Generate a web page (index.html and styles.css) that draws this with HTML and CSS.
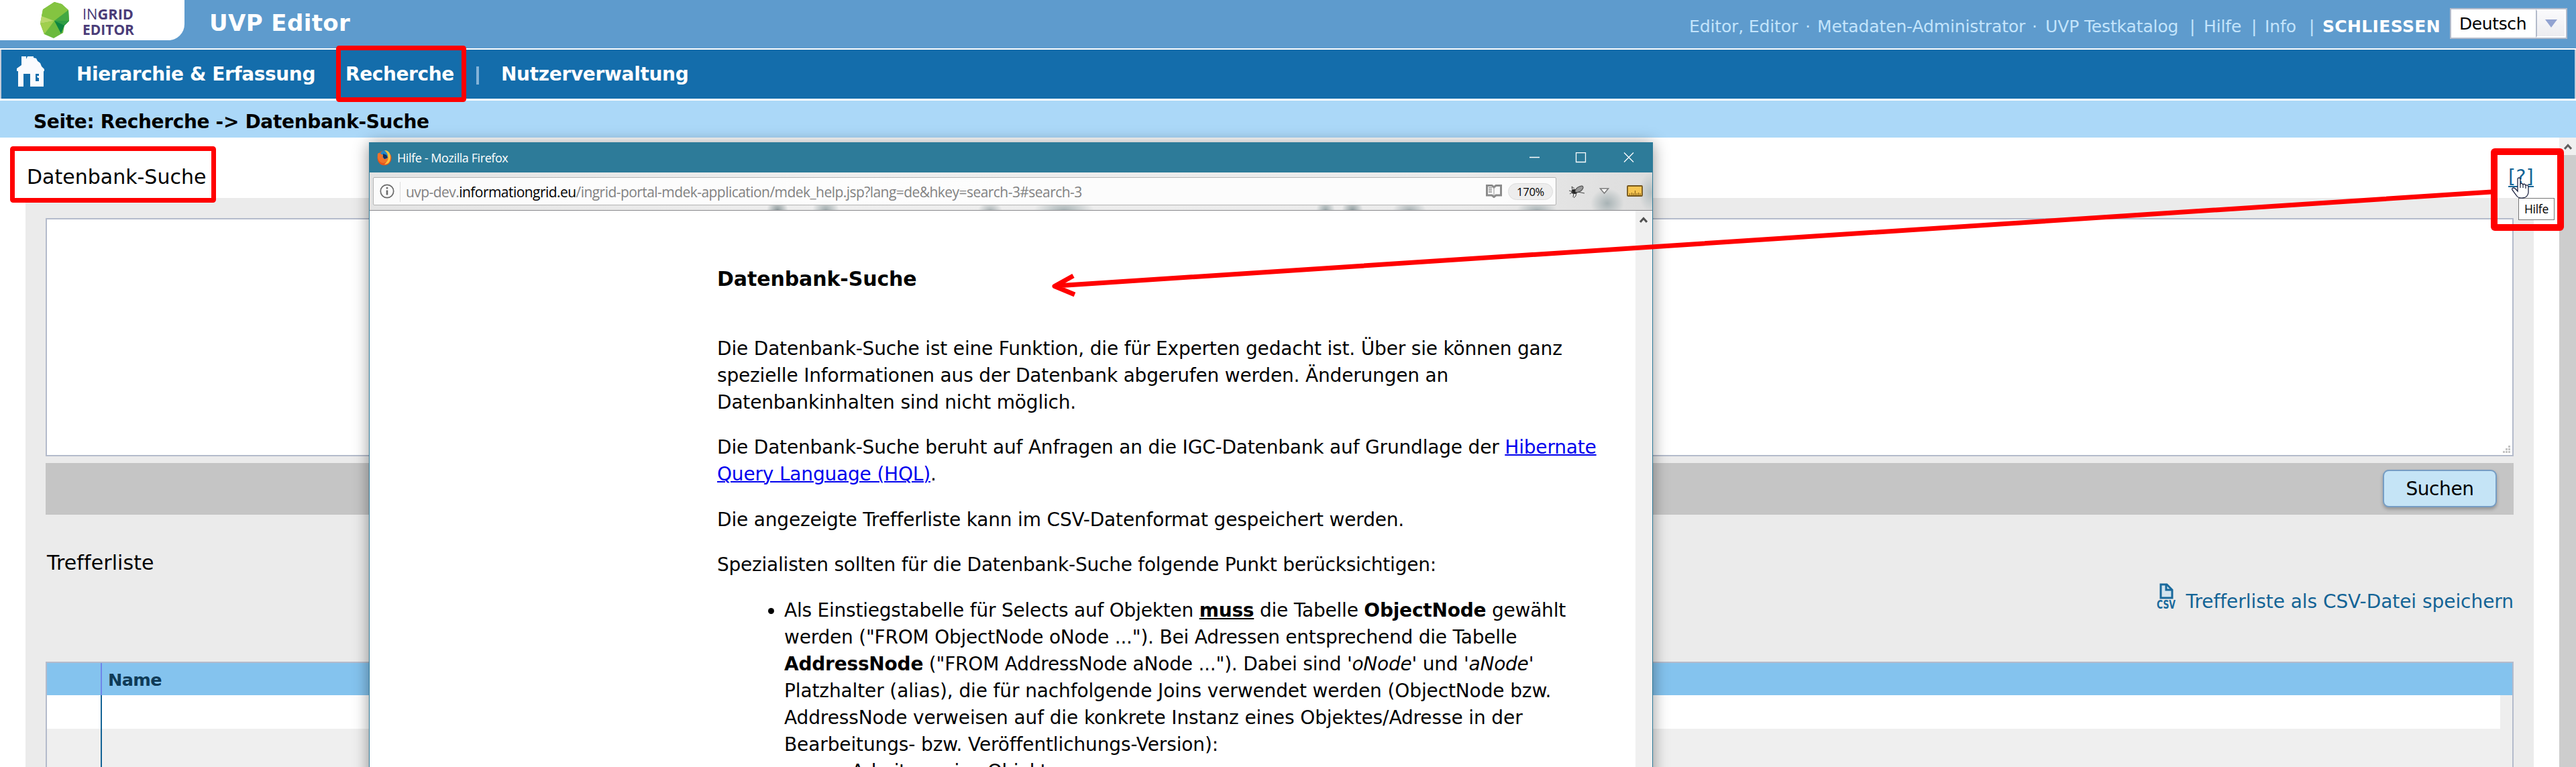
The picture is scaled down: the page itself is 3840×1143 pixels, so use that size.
FILE: index.html
```
<!DOCTYPE html>
<html lang="de">
<head>
<meta charset="utf-8">
<title>UVP Editor</title>
<link rel="stylesheet" href="styles.css">
</head>
<body>
<header class="top">
  <div class="logo">
    <svg width="275" height="60" viewBox="0 0 275 60">
      <path d="M81 3 64 14 60 35 66 51 80 57 94 49 96 38 103 31 102 15 92 6Z" fill="#6cba3d"/>
      <path d="M81 3 64 14 62 24 81 31 102 15 92 6Z" fill="#84c441"/>
      <path d="M62 24 81 31 60 35Z" fill="#b9d86c"/>
      <path d="M60 35 81 31 66 51Z" fill="#a0cf4e"/>
      <path d="M102 15 81 31 103 31Z" fill="#43a843"/>
      <path d="M81 31 103 31 96 38 91 50Z" fill="#0d8540"/>
      <path d="M81 31 96 38 103 31Z" fill="#2f9e45"/>
      <text x="123" y="29" class="logo-text" textLength="76" lengthAdjust="spacingAndGlyphs"><tspan class="logo-light">IN</tspan>GRID</text>
      <text x="123" y="52" class="logo-text" textLength="77" lengthAdjust="spacingAndGlyphs">EDITOR</text>
    </svg>
  </div>
  <h1 class="title">UVP Editor</h1>
  <div class="meta">
    <span>Editor, Editor</span><span>·</span><span>Metadaten-Administrator</span><span>·</span><span>UVP Testkatalog</span><span>|</span><span>Hilfe</span><span>|</span><span>Info</span><span>|</span><b>SCHLIESSEN</b>
  </div>
  <div class="lang"><span class="lang-name">Deutsch</span><span class="lang-arrow"><svg width="20" height="14"><path d="M1 1H19L10 13Z" fill="#92a3d1"/></svg></span></div>
</header>
<nav class="nav">
  <svg class="home" width="42" height="45" viewBox="0 0 42 45"><path fill-rule="evenodd" fill="#fafbfe" d="M7 0H14V4L16 0H25V2L29 3 31 7 35 10 37 15 41 19V22H40V45H20V26H10V45H2V22H0V18L7 13ZM28 26V37H33V26Z"/><path d="M30 29h4v3h-3z" fill="#fafbfe"/></svg>
  <span class="n1">Hierarchie &amp; Erfassung</span>
  <span class="n2">Recherche</span>
  <span class="sep"></span>
  <span class="n3">Nutzerverwaltung</span>
</nav>
<div class="crumb">Seite: Recherche -&gt; Datenbank-Suche</div>
<div class="body-row">
  <main class="main">
    <div class="head-row"><h2>Datenbank-Suche</h2><a class="help">[?]</a></div>
    <section class="panel">
      <div class="query"><svg width="12" height="12" fill="#c4c4c4"><path d="M8 0h3v3h-3zM8 4h3v3h-3zM4 4h3v3h-3zM8 8h3v3h-3zM4 8h3v3h-3zM0 8h3v3h-3z"/></svg></div>
      <div class="actions"><button class="search">Suchen</button></div>
      <h3 class="hits">Trefferliste</h3>
      <div class="csv">
        <svg width="29" height="46" viewBox="0 0 29 46"><path d="M6 2H15L23 10V22H6Z" fill="#d3e4ef" stroke="#19699c" stroke-width="3"/><path d="M14 2V10H22" fill="none" stroke="#19699c" stroke-width="3"/><text x="0" y="38" class="csv-text" textLength="28" lengthAdjust="spacingAndGlyphs">CSV</text></svg>
        <span>Trefferliste als CSV-Datei speichern</span>
      </div>
      <div class="table">
        <div class="thead"><div class="c0"></div><div class="c1">Name</div></div>
        <div class="row white"><div class="c0"></div><div class="c1"></div></div>
        <div class="row grey"><div class="c0"></div><div class="c1"></div></div>
      </div>
    </section>
  </main>
  <div class="scroll"><div class="scroll-btn"><svg width="12" height="10"><path d="M1 8 6 2.500 11 8" fill="none" stroke="#606060" stroke-width="3"/></svg></div><div class="thumb"></div></div>
</div>

<div class="window">
  <div class="titlebar">
    <svg width="22" height="24" viewBox="0 0 22 24"><ellipse cx="11" cy="12.500" rx="10.500" ry="11" fill="#e5561c"/><ellipse cx="12" cy="9.500" rx="8" ry="8.500" fill="#2187c9"/><path d="M11 1C19 1 21 9 20 14 19 20 15 22 11 22 17 17 19 7 11 1Z" fill="#f9c440"/><path d="M1 6C4 3 6 8 10 8 8 10 8 12 10 13 12 15 15 14 16 10 18 16 14 20 9 20 3 19 0 13 1 6Z" fill="#f0742a"/><path d="M9 6 14 8 16 12 11 14 9 11Z" fill="#13305f"/></svg>
    <span>Hilfe - Mozilla Firefox</span>
    <svg class="controls" width="156" height="16" viewBox="0 0 156 16" fill="none" stroke="#fff" stroke-width="1.300"><path d="M0 7.500H15M141 0.500 155 14.500M155 0.500 141 14.500"/><path d="M69.500 .5h14v14h-14z"/></svg>
  </div>
  <div class="toolbar">
    <div class="url">
      <svg width="22" height="22" viewBox="0 0 22 22"><circle cx="11" cy="11" r="9.700" fill="none" stroke="#6a6a6a" stroke-width="1.700"/><path d="M9.700 9.500h2.600v7h-2.600zM9.700 5h2.600v2.600h-2.600z" fill="#6a6a6a"/></svg>
      <span class="address">uvp-dev.<b>informationgrid.eu</b>/ingrid-portal-mdek-application/mdek_help.jsp?lang=de&amp;hkey=search-3#search-3</span>
      <svg width="24" height="20" viewBox="0 0 24 20"><path d="M1.500 1.500H9L12 4 15 1.500H22.500V16H15L12 18.500 9 16H1.500Z" fill="#fafafa" stroke="#8b8b8b" stroke-width="3"/><path d="M12 4V16" stroke="#999" stroke-width="1"/><path d="M4 5h5M4 8h5M4 11h5" stroke="#8b8b8b" stroke-width="1.500"/></svg>
      <span class="zoom">170%</span>
    </div>
    <svg class="fly" width="24" height="20" viewBox="0 0 24 20"><ellipse cx="8" cy="9.500" rx="4.500" ry="3.500" fill="#222"/><ellipse cx="15" cy="6" rx="7" ry="3.500" transform="rotate(-35 15 6)" fill="#999" stroke="#444"/><path d="M0 8 6 10 1 13M7 11 6 18M11 10 10 16 7 19M13 10 23 12M5 7 4 2 8 5" fill="none" stroke="#444"/></svg>
    <svg class="tri" width="15" height="10"><path d="M1.500 1H13.500L7.500 8Z" fill="#fff" stroke="#7b7b7b" stroke-width="1.500"/></svg>
    <svg class="ruler" width="24" height="18" viewBox="0 0 24 18"><rect x="1" y="1" width="22" height="15" rx="1" fill="#f6c552" stroke="#74561d" stroke-width="1.800"/><path d="M4.500 15v-3M7.500 15v-4M10 15v-3M12.500 15V8M15 15v-3M17.500 15v-4M20 15v-3" stroke="#8e681d" stroke-width="1.200"/></svg>
  </div>
  <div class="view">
    <article class="doc">
      <h2>Datenbank-Suche</h2>
      <p>Die Datenbank-Suche ist eine Funktion, die für Experten gedacht ist. Über sie können ganz<br>spezielle Informationen aus der Datenbank abgerufen werden. Änderungen an<br>Datenbankinhalten sind nicht möglich.</p>
      <p>Die Datenbank-Suche beruht auf Anfragen an die IGC-Datenbank auf Grundlage der <a>Hibernate<br>Query Language (HQL)</a>.</p>
      <p>Die angezeigte Trefferliste kann im CSV-Datenformat gespeichert werden.</p>
      <p class="tight">Spezialisten sollten für die Datenbank-Suche folgende Punkt berücksichtigen:</p>
      <ul><li>Als Einstiegstabelle für Selects auf Objekten <b><u>muss</u></b> die Tabelle <b>ObjectNode</b> gewählt<br>werden ("FROM ObjectNode oNode ..."). Bei Adressen entsprechend die Tabelle<br><b>AddressNode</b> ("FROM AddressNode aNode ..."). Dabei sind '<i>oNode</i>' und '<i>aNode</i>'<br><span class="loose">Platzhalter (alias), die für nachfolgende Joins verwendet werden (ObjectNode bzw.<br>AddressNode verweisen auf die konkrete Instanz eines Objektes/Adresse in der<br>Bearbeitungs- bzw. Veröffentlichungs-Version):</span>
        <ul><li>Arbeitsversion Objekte</li></ul></li></ul>
    </article>
    <div class="inner-scroll"><svg width="12" height="10"><path d="M1 8 6 2.500 11 8" fill="none" stroke="#505050" stroke-width="3"/></svg></div>
  </div>
</div>

<svg class="marks" width="3840" height="1143" fill="none" stroke="#f00">
  <rect x="504.500" y="71.500" width="187" height="77" rx="1" stroke-width="7"/>
  <rect x="18.500" y="221.500" width="300" height="77" rx="1" stroke-width="7"/>
  <rect x="3718" y="226" width="99" height="113" rx="1" stroke-width="10"/>
  <path d="M3714 286 1575 426M1600 411 1572 426.500 1602 439" stroke-width="7"/>
</svg>
<div class="tip">Hilfe</div>
<svg class="hand" width="26" height="32" viewBox="0 0 26 32"><path d="M9 21V3Q9 1 11 1 13 1 13 3V10Q15 8 17 11 19 9 21 12 25 11 25 15V23Q24 30 17 31 10 32 7 27L1 19Q0 16 3 16 5 16 9 21Z" fill="#fff" stroke="#1c2340" stroke-width="1.300"/><path d="M13 10v6M17 11v5M21 12v5" stroke="#1c2340" stroke-width="1.200"/></svg>
</body>
</html>
```
FILE: styles.css
```
* { box-sizing: border-box; }
body { margin: 0; width: 3840px; height: 1143px; overflow: hidden; position: relative; background: #fff; color: #000; font-family: "DejaVu Sans", Verdana, sans-serif; font-size: 28px; line-height: 40px; white-space: nowrap; display: flex; flex-direction: column; }
h1, h2, h3, p, ul { margin: 0; padding: 0; font-weight: normal; }
svg { display: block; flex: none; }

.top { height: 72px; flex: none; background: #5e9bcd; display: flex; align-items: flex-start; }
.logo { width: 275px; height: 60px; background: #fff; border-bottom-right-radius: 24px; }
.logo-text { font: bold 21.5px "Open Sans", sans-serif; fill: #4a3c78; }
.logo-light { font-weight: 400; }
.title { margin: 14px auto 0 37px; font-size: 34px; font-weight: bold; letter-spacing: .4px; color: #fff; }
.meta { margin-top: 25px; display: grid; grid-template-columns: 173px 18px 320px 20px 215px 21px 71px 20px 66px 20px 190px; font-size: 25px; line-height: 30px; letter-spacing: -.13px; color: #c3e4fb; }
.meta b { color: #fff; letter-spacing: .35px; }
.lang { margin: 12px 13px 0 0; width: 175px; height: 46px; border: 2px solid #b4bbcb; background: #fff; display: flex; }
.lang-name { flex: 1; padding-left: 12px; font-size: 25px; line-height: 44px; letter-spacing: -.4px; }
.lang-arrow { width: 45px; border: 2px solid #fff; border-left: 2px solid #b4bbcb; background: linear-gradient(#fafafc, #ececf0); display: flex; align-items: center; justify-content: center; }

.nav { margin: 2px 0 3px; height: 73px; flex: none; background: #146dab; border: solid #c3cbd9; border-width: 0 2px; padding: 17px 0 0 23px; display: flex; align-items: flex-start; color: #fff; font-weight: bold; letter-spacing: -.4px; }
.home { margin: -7px 47px 0 0; }
.n1 { width: 401px; }
.n2 { width: 197px; }
.sep { width: 4px; height: 27px; margin: 8px 33px 0 -2px; background: #83b3d8; }
.n3 { letter-spacing: -.32px; }
.crumb { height: 55px; flex: none; padding: 12px 0 0 50px; background: #abd8f8; font-weight: bold; letter-spacing: -.33px; }

.body-row { flex: 1; display: flex; min-height: 0; }
.main { flex: 1; padding-left: 38px; display: flex; flex-direction: column; }
.head-row { height: 90px; padding: 39px 38px 0 0; display: flex; justify-content: space-between; }
.head-row h2 { padding-left: 2px; font-size: 30px; letter-spacing: 0; }
.help { color: #146496; text-decoration: underline; text-decoration-thickness: 2px; text-underline-offset: 4px; letter-spacing: .4px; }
.panel { flex: 1; width: 3739px; background: #ebebeb; padding: 30px 30px 0; display: flex; flex-direction: column; }
.query { height: 355px; flex: none; border: 2px solid #b4bbcb; background: #fff; display: flex; justify-content: flex-end; align-items: flex-end; padding: 2px; }
.actions { height: 77px; flex: none; margin-top: 10px; background: #c5c5c5; padding: 10px 25px 0 0; display: flex; justify-content: flex-end; align-items: flex-start; }
.search { width: 170px; height: 56px; padding: 0; border: 2px solid #769dc4; border-radius: 9px; background: #c5e4f6; box-shadow: 0 3px 5px rgba(0,0,0,.25); font: 28px "DejaVu Sans", sans-serif; letter-spacing: -.4px; color: #000; }
.hits { margin-top: 52px; padding-left: 2px; font-size: 30px; letter-spacing: .1px; }
.csv { margin-top: 18px; height: 40px; display: flex; justify-content: flex-end; gap: 15px; color: #146496; letter-spacing: -.05px; }
.csv svg { margin-top: -8px; }
.csv-text { font: bold 17px "DejaVu Sans", sans-serif; fill: #19699c; }
.table { flex: 1; margin-top: 69px; border: solid #b4bbcb; border-width: 2px 2px 0; background: #eee; display: flex; flex-direction: column; }
.thead { height: 48px; display: flex; background: #84c3ee; color: #0f3b57; font-size: 25.500px; font-weight: bold; line-height: 51px; letter-spacing: -.6px; }
.c0 { width: 82px; border-right: 2px solid #146496; }
.thead .c0 { border-color: #6f86ea; }
.thead .c1 { padding-left: 9px; }
.row { display: flex; width: 3657px; }
.white { height: 50px; background: #fff; }
.grey { flex: 1; background: #efefef; }
.scroll { width: 25px; background: #cdcdcd; display: flex; flex-direction: column; }
.scroll-btn { height: 26px; background: #f0f0f0; padding: 9px 0 0 7px; }

.window { position: absolute; left: 550px; top: 212px; width: 1914px; height: 960px; border: 1px solid #2e7b9a; background: #fff; box-shadow: 0 2px 22px rgba(0,0,0,.42); display: flex; flex-direction: column; font-family: "Open Sans", sans-serif; }
.titlebar { height: 44px; flex: none; background: #2d7b99; padding-left: 11px; display: flex; align-items: center; color: #fff; font-size: 18px; letter-spacing: -.42px; }
.titlebar span { margin: 0 auto 0 8px; }
.titlebar svg:first-child { margin-top: -1px; }
.controls { margin: -1px 27px 0 0; }
.toolbar { height: 57px; flex: none; padding: 7px 14px 0 5px; border-bottom: 1px solid #89898d; display: flex; align-items: flex-start; background: radial-gradient(ellipse 25px 22px at 1845px 46px, #a8b3b5, transparent), radial-gradient(ellipse 18px 30px at 1910px 30px, #b5c0c2, transparent), radial-gradient(ellipse 16px 16px at 608px 56px, #8d999b, transparent), radial-gradient(ellipse 20px 18px at 680px 56px, #a0abad, transparent), radial-gradient(ellipse 18px 12px at 925px 56px, #aeb6b8, transparent), radial-gradient(ellipse 45px 18px at 1035px 56px, #a9b4b6, transparent), radial-gradient(ellipse 14px 16px at 1425px 56px, #9ba8aa, transparent), radial-gradient(ellipse 16px 16px at 1465px 56px, #909d9f, transparent), radial-gradient(ellipse 25px 14px at 1550px 56px, #a9b2b4, transparent), radial-gradient(ellipse 30px 14px at 1740px 56px, #aab5b7, transparent), linear-gradient(90deg, #e3e3e3, #eee 35%, #ebebeb 85%, #ddd); }
.url { width: 1764px; height: 42px; border: 1px solid #b4b4b4; border-radius: 2px; background: rgba(255,255,255,.84); padding-left: 9px; display: flex; align-items: center; }
.address { margin: 2px auto 0 8px; padding-left: 8px; border-left: 1px solid #ddd; line-height: 30px; font-size: 21px; letter-spacing: -.55px; color: #828282; }
.address b { font-weight: normal; color: #000; }
.zoom { margin: 0 4px 0 9px; width: 67px; height: 25px; border: 1px solid #ddd; border-radius: 13px; background: #ededed; text-align: center; font-size: 16.500px; line-height: 24px; letter-spacing: -.2px; }
.fly { margin: 12px 0 0 19px; }
.tri { margin: 16px 0 0 21px; }
.ruler { margin: 12px 0 0 auto; }
.view { flex: 1; min-height: 0; display: flex; justify-content: space-between; }
.doc { padding: 81px 0 0 518px; font-family: "DejaVu Sans", Verdana, sans-serif; font-size: 28px; letter-spacing: -.18px; }
.doc h2 { font-size: 30px; font-weight: bold; line-height: 42px; margin-bottom: 63px; letter-spacing: -.1px; }
.doc p { margin-bottom: 27.400px; }
.doc .tight { letter-spacing: -.23px; }
.doc .loose { letter-spacing: -.12px; }
.doc a { color: #00e; text-decoration: underline; text-decoration-thickness: 2px; }
.doc ul { padding-left: 100px; letter-spacing: -.22px; }
.doc ul ul { list-style: circle; letter-spacing: -.5px; }
.inner-scroll { width: 25px; background: #f0f0f0; padding: 9px 0 0 6px; }

.marks { position: absolute; left: 0; top: 0; stroke-linejoin: round; }
.tip { position: absolute; left: 3754px; top: 295px; width: 54px; height: 33px; border: 1px solid #767676; background: #fff; text-align: center; font: 17.500px/30px "Open Sans", sans-serif; letter-spacing: -.3px; }
.hand { position: absolute; left: 3744px; top: 264px; }
```
